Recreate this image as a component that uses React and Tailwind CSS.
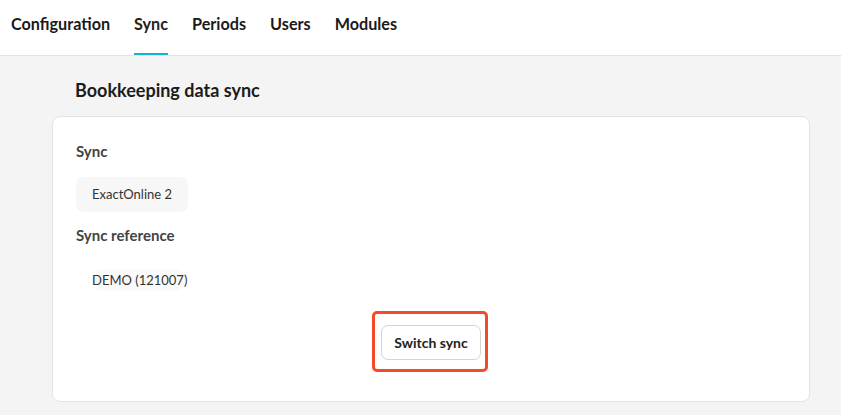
export default function App() {
  const tabs = ["Configuration", "Sync", "Periods", "Users", "Modules"];
  return (
    <div className="min-h-[415px] bg-[#f4f4f4] font-['Lato','Liberation_Sans',sans-serif] text-[#1f1f1f]">
      <nav className="flex h-[56px] items-stretch gap-[24px] border-b border-[#e2e2e2] bg-white px-[11px]">
        {tabs.map((t) => (
          <div
            key={t}
            className={
              "flex items-center border-b-[2px] pb-[5px] text-[16.2px] font-bold " +
              (t === "Sync" ? "border-[#15b2cf] text-[#222]" : "border-transparent text-[#1a1a1a]")
            }
          >
            {t}
          </div>
        ))}
      </nav>

      <div className="ml-[52px] w-[758px] pb-[14px]">
        <h2 className="px-[23px] pt-[22px] pb-[13px] text-[18px] leading-[25px] font-bold text-[#1c1c1c]">
          Bookkeeping data sync
        </h2>

        <div className="rounded-[8px] border border-[#e3e3e3] bg-white px-[23px] pt-[24px] pb-[41px]">
          <div className="text-[15px] leading-[20px] font-bold text-[#444]">Sync</div>
          <div className="mt-[16px] flex h-[35px] w-fit items-center whitespace-nowrap rounded-[7px] bg-[#f7f7f7] px-[16px] text-[13px] text-[#333]">
            ExactOnline 2
          </div>

          <div className="mt-[13px] text-[15px] leading-[20px] font-bold text-[#444]">Sync reference</div>
          <div className="mt-[17px] flex h-[35px] items-center px-[16px] text-[13px] text-[#333]">
            <span className="rounded-full bg-[#fafafa] leading-[22px]">DEMO (121007)</span>
          </div>

          <div className="mt-[28px] flex justify-center">
            <div className="relative">
              <button className="h-[35px] w-[100px] rounded-[7px] border border-[#d4d4d4] bg-white text-[14px] font-bold text-[#222]">
                Switch sync
              </button>
              <div className="pointer-events-none absolute -top-[14px] -bottom-[12px] -left-[9px] -right-[7px] rounded-[5px] border-[3px] border-[#f24b27]" />
            </div>
          </div>
        </div>
      </div>
    </div>
  );
}
